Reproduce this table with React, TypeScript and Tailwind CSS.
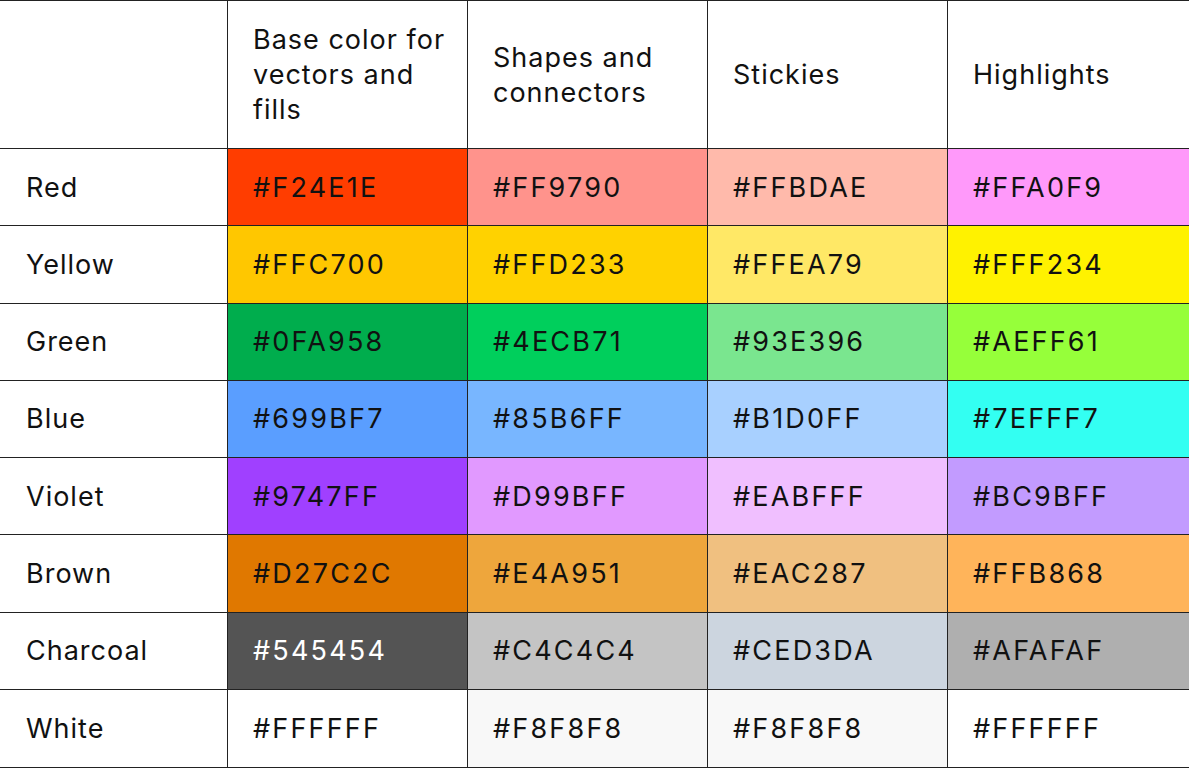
import React from "react";

type Row = { name: string; cells: { hex: string; bg: string; light?: boolean }[] };

const rows: Row[] = [
  { name: "Red", cells: [
    { hex: "#F24E1E", bg: "#FF3D00" },
    { hex: "#FF9790", bg: "#FF938C" },
    { hex: "#FFBDAE", bg: "#FFBAAB" },
    { hex: "#FFA0F9", bg: "#FF99FA" },
  ] },
  { name: "Yellow", cells: [
    { hex: "#FFC700", bg: "#FFC700" },
    { hex: "#FFD233", bg: "#FFD200" },
    { hex: "#FFEA79", bg: "#FFE866" },
    { hex: "#FFF234", bg: "#FFF200" },
  ] },
  { name: "Green", cells: [
    { hex: "#0FA958", bg: "#00AD4D" },
    { hex: "#4ECB71", bg: "#00CF5C" },
    { hex: "#93E396", bg: "#7AE68F" },
    { hex: "#AEFF61", bg: "#96FF3A" },
  ] },
  { name: "Blue", cells: [
    { hex: "#699BF7", bg: "#5A9EFF" },
    { hex: "#85B6FF", bg: "#78B6FF" },
    { hex: "#B1D0FF", bg: "#A8D0FF" },
    { hex: "#7EFFF7", bg: "#33FFF2" },
  ] },
  { name: "Violet", cells: [
    { hex: "#9747FF", bg: "#A040FF" },
    { hex: "#D99BFF", bg: "#E199FF" },
    { hex: "#EABFFF", bg: "#F0BFFF" },
    { hex: "#BC9BFF", bg: "#C29BFF" },
  ] },
  { name: "Brown", cells: [
    { hex: "#D27C2C", bg: "#E07800" },
    { hex: "#E4A951", bg: "#EEA63C" },
    { hex: "#EAC287", bg: "#F0C080" },
    { hex: "#FFB868", bg: "#FFB45A" },
  ] },
  { name: "Charcoal", cells: [
    { hex: "#545454", bg: "#545454", light: true },
    { hex: "#C4C4C4", bg: "#C4C4C4" },
    { hex: "#CED3DA", bg: "#CCD5DF" },
    { hex: "#AFAFAF", bg: "#AFAFAF" },
  ] },
  { name: "White", cells: [
    { hex: "#FFFFFF", bg: "#FFFFFF" },
    { hex: "#F8F8F8", bg: "#F8F8F8" },
    { hex: "#F8F8F8", bg: "#F8F8F8" },
    { hex: "#FFFFFF", bg: "#FFFFFF" },
  ] },
];

const headers = ["Base color for vectors and fills", "Shapes and connectors", "Stickies", "Highlights"];

export default function App() {
  return (
    <div
      className="w-[1189px] h-[768px] bg-white text-[#111] text-[27px] leading-[35px] tracking-[1px] grid grid-cols-[228px_240px_240px_240px_241px] grid-rows-[148px_repeat(8,1fr)] border-t border-b-[1.5px] border-[#222] overflow-hidden"
      style={{ fontFamily: "Inter, 'Noto Sans', sans-serif" }}
    >
      <div className="border-r-[1.5px] border-b-[1.5px] border-[#222]" />
      {headers.map((h, i) => (
        <div
          key={h}
          className={`flex items-center pl-[25px] pr-[14px] border-b-[1.5px] border-[#222] ${i < 3 ? "border-r-[1.5px]" : ""}`}
        >
          <span>{h}</span>
        </div>
      ))}
      {rows.map((r, ri) => (
        <React.Fragment key={r.name}>
          <div
            className={`flex items-center pl-[26px] border-r-[1.5px] border-[#222] ${ri < rows.length - 1 ? "border-b-[1.5px]" : ""}`}
          >
            {r.name}
          </div>
          {r.cells.map((c, ci) => (
            <div
              key={ci}
              className={`flex items-center pl-[25px] tracking-[2.2px] border-[#222] ${ci < 3 ? "border-r-[1.5px]" : ""} ${ri < rows.length - 1 ? "border-b-[1.5px]" : ""} ${c.light ? "text-white" : ""}`}
              style={{ backgroundColor: c.bg }}
            >
              {c.hex}
            </div>
          ))}
        </React.Fragment>
      ))}
    </div>
  );
}
